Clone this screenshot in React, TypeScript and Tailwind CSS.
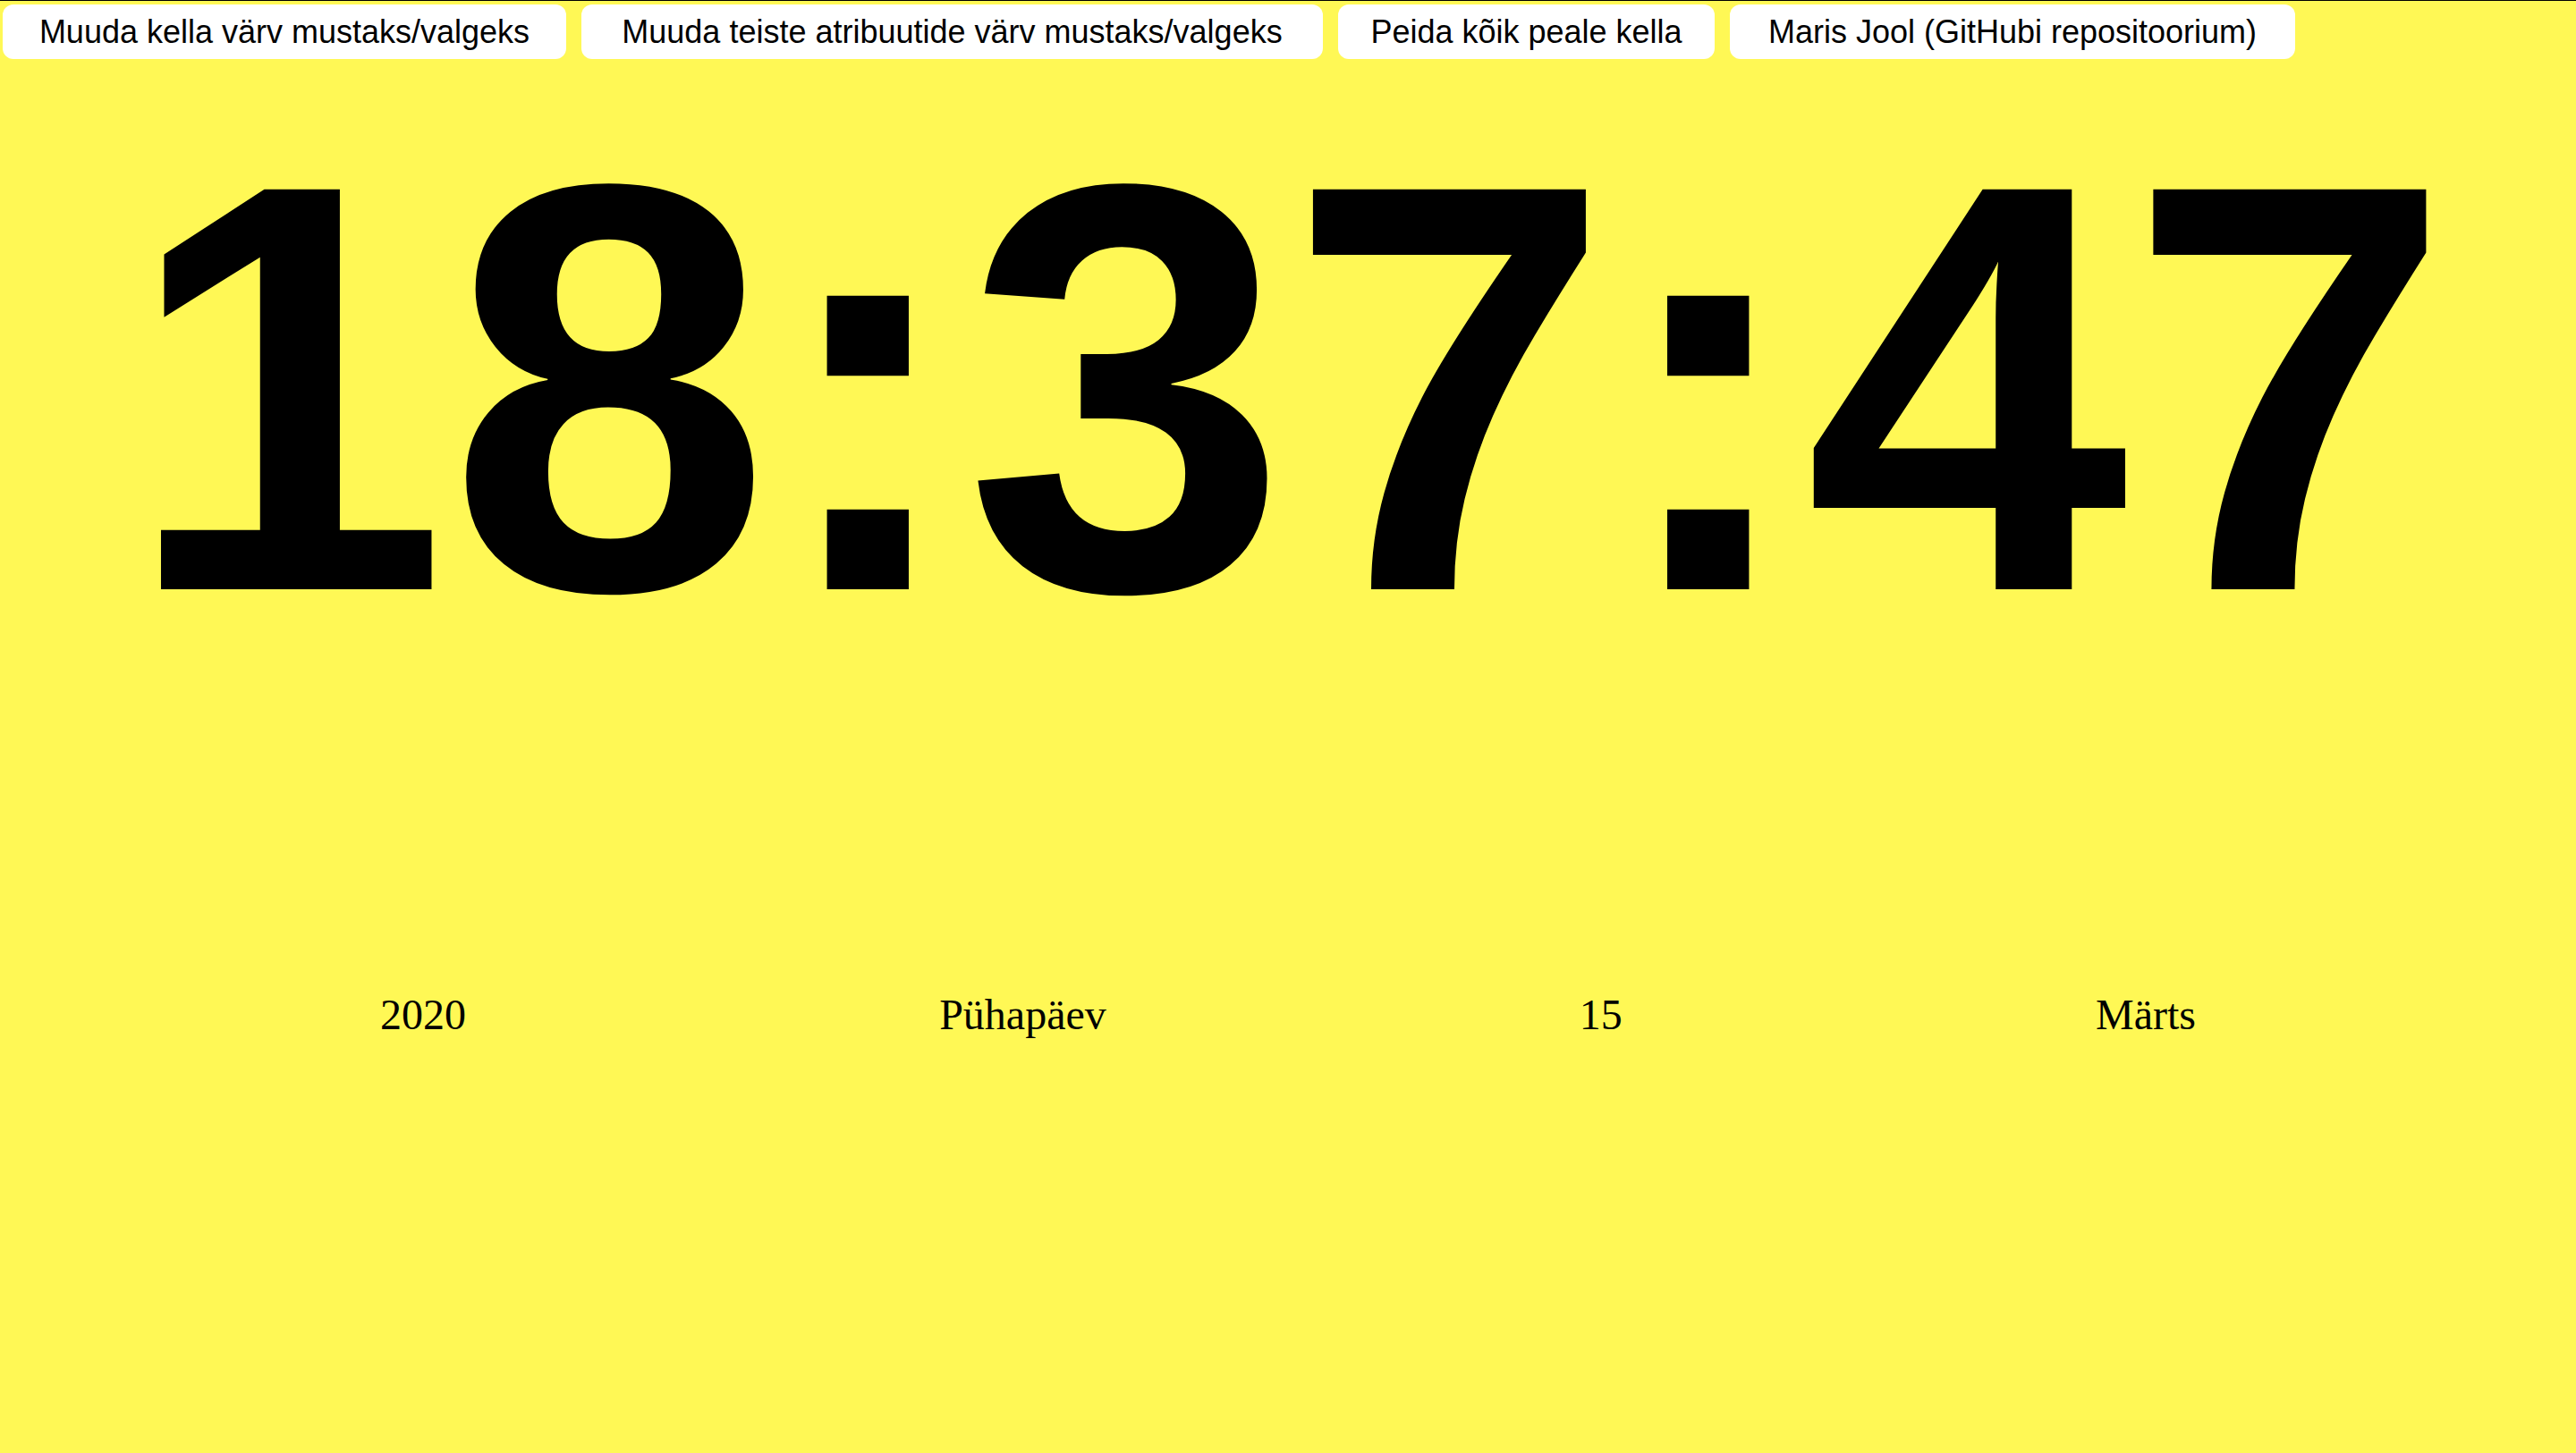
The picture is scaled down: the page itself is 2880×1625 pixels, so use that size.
import React from "react";

const buttons: { label: string; w: string }[] = [
  { label: "Muuda kella värv mustaks/valgeks", w: "w-[630px]" },
  { label: "Muuda teiste atribuutide värv mustaks/valgeks", w: "w-[829px]" },
  { label: "Peida kõik peale kella", w: "w-[421px]" },
  { label: "Maris Jool (GitHubi repositoorium)", w: "w-[632px]" },
];

export default function App() {
  return (
    <div className="w-[2880px] h-[1625px] bg-[#fff855] border-t border-black overflow-hidden">
      <div className="flex gap-[17px] pl-[3px] pt-[4px]">
        {buttons.map((b) => (
          <button
            key={b.label}
            className={`${b.w} bg-white rounded-[12px] py-[10px] text-center whitespace-nowrap leading-[41px] text-[36px] text-black font-['Liberation_Sans',Arial,sans-serif]`}
          >
            {b.label}
          </button>
        ))}
      </div>
      <div className="-mt-[5px] text-center font-['Liberation_Sans',Arial,sans-serif] font-bold text-[650px] leading-[normal] text-black">
        18:37:47
      </div>
      <div className="mt-[299px] flex justify-between px-[425px] font-['Liberation_Serif','Times_New_Roman',serif] text-[48px] leading-[normal] text-black">
        <span>2020</span>
        <span>Pühapäev</span>
        <span>15</span>
        <span>Märts</span>
      </div>
    </div>
  );
}
